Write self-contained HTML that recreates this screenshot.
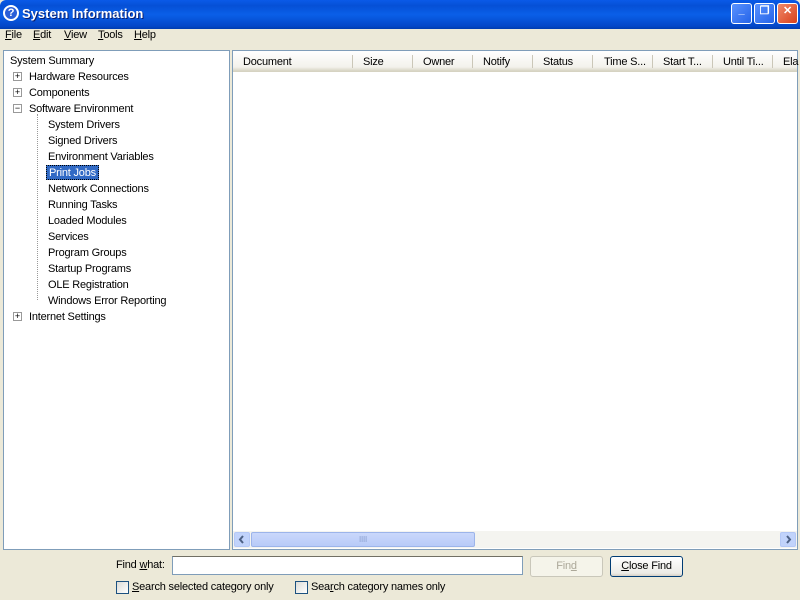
<!DOCTYPE html>
<html><head><style>
*{margin:0;padding:0;box-sizing:border-box}
body{width:800px;height:600px;background:#ece9d8;font-family:"Liberation Sans",sans-serif;font-size:11px;letter-spacing:-0.2px;color:#000;position:relative;overflow:hidden}
.abs{position:absolute}
#title{left:0;top:0;width:800px;height:29px;background:linear-gradient(#0a5ae8,#0550d6 20%,#0a5fe8 50%,#0447c8 90%,#003cb0);border-radius:6px 6px 0 0}
#title .t{left:22px;top:6px;color:#fff;font-weight:bold;font-size:13px;letter-spacing:0;text-shadow:1px 1px #0a1e6e}
.ic{left:3px;top:5px;width:16px;height:16px;border-radius:50%;background:#2a5fd8;border:2px solid #fff;color:#fff;font-size:11px;font-weight:bold;text-align:center;line-height:12px}
.wb{top:3px;width:21px;height:21px;border:1px solid #fff;border-radius:3px;background:linear-gradient(135deg,#5a92ff,#2463e8);color:#fff;text-align:center;font-weight:bold}
#menu{left:0;top:29px;width:800px;height:17px}
#menu span{position:absolute;top:0;font-size:11px}
#left{left:3px;top:50px;width:227px;height:500px;background:#fff;border:1px solid #7f9db9}
.r{position:absolute;white-space:nowrap;height:14px;line-height:14px}
.pb{position:absolute;width:9px;height:9px;border:1px solid #999;background:#fff;font-size:9px;line-height:7px;text-align:center;letter-spacing:0}
#right{left:232px;top:50px;width:566px;height:500px;background:#fff;border:1px solid #7f9db9}
#hdr{left:0;top:0;width:564px;height:21px;background:linear-gradient(#fff,#f3f2ec 80%,#d6d3c2);border-bottom:1px solid #d6d3c2}
#hdr span{position:absolute;top:5px}
#hdr i{position:absolute;top:4px;width:1px;height:13px;background:#cbc7b8}
#sb{left:0;top:480px;width:564px;height:17px;background:#f4f4f0}
.btn{border:1px solid #003c74;border-radius:3px;background:linear-gradient(#fff,#ecebe6 85%,#d6d0c5);text-align:center;line-height:19px}
.cb{width:13px;height:13px;border:1px solid #1c5180;background:linear-gradient(135deg,#dcdcd7,#fff)}
</style></head><body>
<div id="title" class="abs"><div class="abs ic">?</div><div class="abs t">System Information</div>
<div class="abs wb" style="left:731px">_</div>
<div class="abs wb" style="left:754px">❐</div>
<div class="abs wb" style="left:777px;background:linear-gradient(135deg,#f08a6a,#d8401c)">✕</div></div>
<div id="menu" class="abs"><span style="left:5px;top:0px"><u>F</u>ile</span><span style="left:33px"><u>E</u>dit</span><span style="left:64px"><u>V</u>iew</span><span style="left:98px"><u>T</u>ools</span><span style="left:134px"><u>H</u>elp</span></div>
<div id="left" class="abs">
<div class="r" style="left:6px;top:3px">System Summary</div>
<div class="pb" style="left:9px;top:21px">+</div><div class="r" style="left:25px;top:19px">Hardware Resources</div>
<div class="pb" style="left:9px;top:37px">+</div><div class="r" style="left:25px;top:35px">Components</div>
<div class="pb" style="left:9px;top:53px">−</div><div class="r" style="left:25px;top:51px">Software Environment</div>
<div class="abs" style="left:33px;top:63px;width:1px;height:186px;border-left:1px dotted #999"></div>
<div class="r" style="left:44px;top:67px">System Drivers</div>
<div class="r" style="left:44px;top:83px">Signed Drivers</div>
<div class="r" style="left:44px;top:99px">Environment Variables</div>
<div class="r" style="left:42px;top:114px;background:#316ac5;color:#fff;padding:0 2px;border:1px dotted #000;height:15px">Print Jobs</div>
<div class="r" style="left:44px;top:131px">Network Connections</div>
<div class="r" style="left:44px;top:147px">Running Tasks</div>
<div class="r" style="left:44px;top:163px">Loaded Modules</div>
<div class="r" style="left:44px;top:179px">Services</div>
<div class="r" style="left:44px;top:195px">Program Groups</div>
<div class="r" style="left:44px;top:211px">Startup Programs</div>
<div class="r" style="left:44px;top:227px">OLE Registration</div>
<div class="r" style="left:44px;top:243px">Windows Error Reporting</div>
<div class="pb" style="left:9px;top:261px">+</div><div class="r" style="left:25px;top:259px">Internet Settings</div>
</div>
<div id="right" class="abs">
<div id="hdr" class="abs"><span style="left:10px">Document</span><i style="left:119px"></i><span style="left:130px">Size</span><i style="left:179px"></i><span style="left:190px">Owner</span><i style="left:239px"></i><span style="left:250px">Notify</span><i style="left:299px"></i><span style="left:310px">Status</span><i style="left:359px"></i><span style="left:371px">Time S...</span><i style="left:419px"></i><span style="left:430px">Start T...</span><i style="left:479px"></i><span style="left:490px">Until Ti...</span><i style="left:539px"></i><span style="left:550px">Ela</span></div>
<div id="sb" class="abs">
<div class="abs" style="left:1px;top:1px;width:16px;height:15px;border-radius:2px;background:#c1d3fb;border:1px solid #b4c8f6"><svg width="14" height="13"><path d="M8 3L5 6.5 8 10" stroke="#4d6185" stroke-width="2" fill="none"/></svg></div>
<div class="abs" style="left:18px;top:1px;width:224px;height:15px;border-radius:2px;background:linear-gradient(#cad8fb,#b8cbf8);border:1px solid #9cb4ea;text-align:center;color:#8aa0d0;font-size:8px;line-height:13px">IIII</div>
<div class="abs" style="left:547px;top:1px;width:16px;height:15px;border-radius:2px;background:#c1d3fb;border:1px solid #b4c8f6"><svg width="14" height="13"><path d="M6 3L9 6.5 6 10" stroke="#4d6185" stroke-width="2" fill="none"/></svg></div>
</div></div>
<div class="abs" style="left:116px;top:559px">Find <u>w</u>hat:</div>
<div class="abs" style="left:172px;top:556px;width:351px;height:19px;background:#fff;border:1px solid #7f9db9;border-top-color:#716f64"></div>
<div class="abs btn" style="left:530px;top:556px;width:73px;height:21px;border-color:#c9c7ba;color:#aca899;background:#f5f4ea">Fin<u>d</u></div>
<div class="abs btn" style="left:610px;top:556px;width:73px;height:21px"><u>C</u>lose Find</div>
<div class="abs cb" style="left:116px;top:581px"></div><div class="abs" style="left:132px;top:581px"><u>S</u>earch selected category only</div>
<div class="abs cb" style="left:295px;top:581px"></div><div class="abs" style="left:311px;top:581px">Sea<u>r</u>ch category names only</div>
</body></html>
